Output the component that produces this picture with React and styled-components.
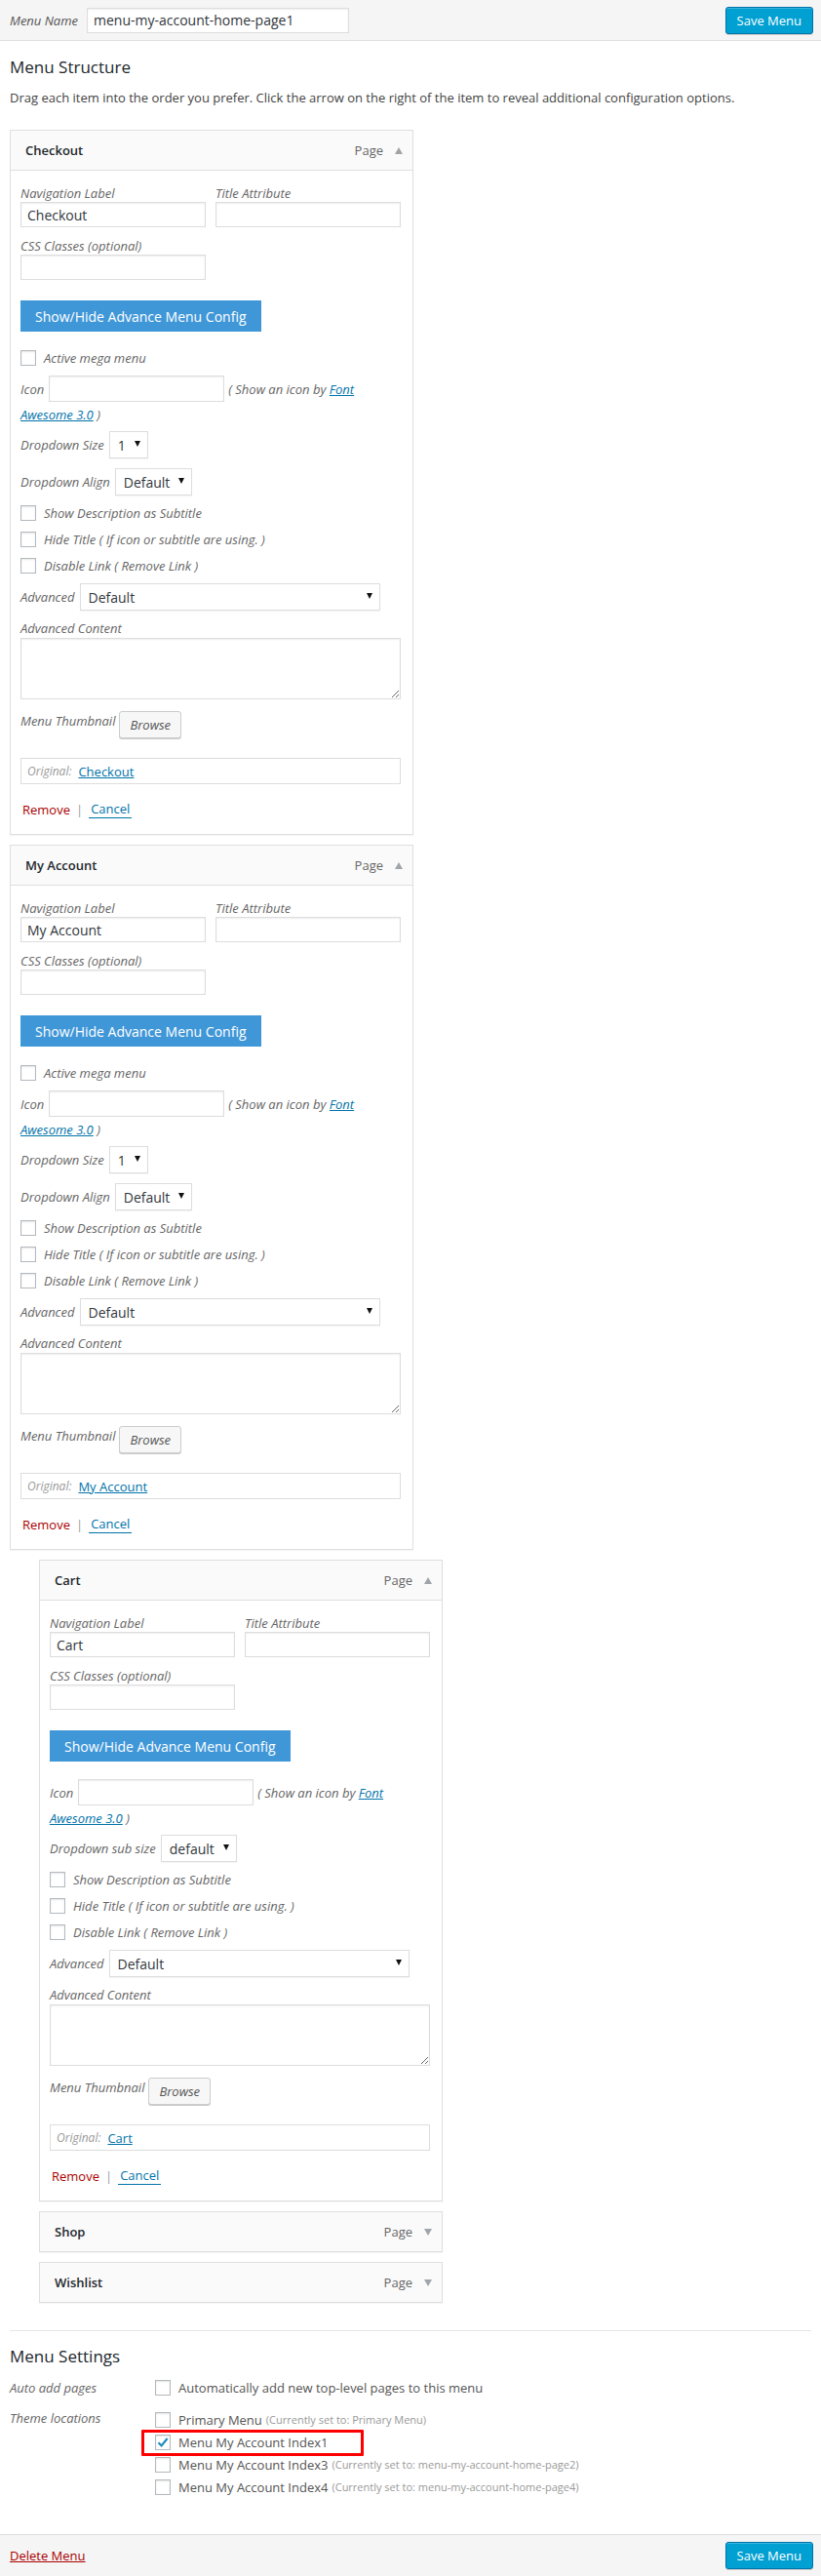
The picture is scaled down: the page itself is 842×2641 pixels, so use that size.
import styled, { createGlobalStyle } from 'styled-components';

const GlobalStyle = createGlobalStyle`
  html, body {
    margin: 0;
    padding: 0;
    background: #fff;
  }
  body {
    font-family: "Open Sans", "Liberation Sans", sans-serif;
    font-size: 13px;
    color: #444;
  }
  * {
    box-sizing: border-box;
  }
`;

const items = [
    { title: 'Checkout', depth: 0, open: true, mega: true },
    { title: 'My Account', depth: 0, open: true, mega: true },
    { title: 'Cart', depth: 1, open: true, mega: false },
    { title: 'Shop', depth: 1, open: false },
    { title: 'Wishlist', depth: 1, open: false },
];

const locations = [
    { name: 'Primary Menu', note: '(Currently set to: Primary Menu)' },
    { name: 'Menu My Account Index1', checked: true, marked: true },
    { name: 'Menu My Account Index3', note: '(Currently set to: menu-my-account-home-page2)' },
    { name: 'Menu My Account Index4', note: '(Currently set to: menu-my-account-home-page4)' },
];

function Check({ checked }) {
    return (
        <Box16>
            {checked && (
                <svg width="14" height="14" viewBox="0 0 14 14">
                    <path d="M2.5 7.2 L5.6 10.4 L11.6 3" fill="none" stroke="#1e8cbe" strokeWidth="2.2" />
                </svg>
            )}
        </Box16>
    );
}

function MenuItem({ item }) {
    return (
        <ItemBox $depth={item.depth}>
            <Handle $open={item.open}>
                <ItemTitle>{item.title}</ItemTitle>
                <ItemType>Page</ItemType>
                <Toggle $open={item.open} />
            </Handle>
            {item.open && (
                <Settings>
                    <FieldPair>
                        <Field>
                            <FieldLabel>Navigation Label</FieldLabel>
                            <TextInput readOnly value={item.title} />
                        </Field>
                        <Field>
                            <FieldLabel>Title Attribute</FieldLabel>
                            <TextInput readOnly value="" />
                        </Field>
                    </FieldPair>
                    <Field $mt={10}>
                        <FieldLabel>CSS Classes (optional)</FieldLabel>
                        <TextInput readOnly value="" />
                    </Field>
                    <ConfigButton $mt={21}>Show/Hide Advance Menu Config</ConfigButton>
                    {item.mega && (
                        <CheckRow $mt={17}>
                            <Check />
                            <span>Active mega menu</span>
                        </CheckRow>
                    )}
                    <IconBlock $mt={item.mega ? 8 : 18}>
                        <IconRow>
                            <span>Icon</span>
                            <IconInput readOnly value="" />
                            <span>( Show an icon by <Link href="#">Font</Link></span>
                        </IconRow>
                        <IconNote>
                            <Link href="#">Awesome 3.0</Link> )
                        </IconNote>
                    </IconBlock>
                    {item.mega ? (
                        <>
                            <SelectRow $mt={8}>
                                <span>Dropdown Size</span>
                                <SelectBox $w={40}>1<Caret /></SelectBox>
                            </SelectRow>
                            <SelectRow $mt={10}>
                                <span>Dropdown Align</span>
                                <SelectBox $w={79}>Default<Caret /></SelectBox>
                            </SelectRow>
                        </>
                    ) : (
                        <SelectRow $mt={8}>
                            <span>Dropdown sub size</span>
                            <SelectBox $w={78}>default<Caret /></SelectBox>
                        </SelectRow>
                    )}
                    <CheckRow $mt={8}>
                        <Check />
                        <span>Show Description as Subtitle</span>
                    </CheckRow>
                    <CheckRow $mt={7}>
                        <Check />
                        <span>Hide Title ( If icon or subtitle are using. )</span>
                    </CheckRow>
                    <CheckRow $mt={7}>
                        <Check />
                        <span>Disable Link ( Remove Link )</span>
                    </CheckRow>
                    <SelectRow $mt={8}>
                        <span>Advanced</span>
                        <SelectBox $w={308}>Default<Caret /></SelectBox>
                    </SelectRow>
                    <Field $mt={9} $wide>
                        <FieldLabel>Advanced Content</FieldLabel>
                        <TextArea readOnly value="" />
                    </Field>
                    <ThumbRow $mt={12}>
                        <span>Menu Thumbnail</span>
                        <BrowseButton>Browse</BrowseButton>
                    </ThumbRow>
                    <Original $mt={20}>
                        <span>Original:</span>
                        <Link href="#">{item.title}</Link>
                    </Original>
                    <Actions $mt={16}>
                        <RemoveLink href="#">Remove</RemoveLink>
                        <Sep>|</Sep>
                        <CancelLink href="#">Cancel</CancelLink>
                    </Actions>
                </Settings>
            )}
        </ItemBox>
    );
}

export default function App() {
    return (
        <Page>
            <GlobalStyle />
            <Bar $top>
                <NameGroup>
                    <NameLabel>Menu Name</NameLabel>
                    <NameInput readOnly value="menu-my-account-home-page1" />
                </NameGroup>
                <SaveButton>Save Menu</SaveButton>
            </Bar>
            <Content>
                <SectionTitle $mt={16}>Menu Structure</SectionTitle>
                <Hint>Drag each item into the order you prefer. Click the arrow on the right of the item to reveal additional configuration options.</Hint>
                <MenuList>
                    {items.map((item, index) => <MenuItem item={item} key={index} />)}
                </MenuList>
                <Divider />
                <SectionTitle $mt={15}>Menu Settings</SectionTitle>
                <SettingRow $mt={11}>
                    <SettingLabel>Auto add pages</SettingLabel>
                    <Options>
                        <Option>
                            <Check />
                            <span>Automatically add new top-level pages to this menu</span>
                        </Option>
                    </Options>
                </SettingRow>
                <SettingRow $mt={11}>
                    <SettingLabel>Theme locations</SettingLabel>
                    <Options>
                        {locations.map((loc) => (
                            <Option key={loc.name} $tall>
                                {loc.marked && <Highlight />}
                                <Check checked={loc.checked} />
                                <span>{loc.name}</span>
                                {loc.note && <Note>{loc.note}</Note>}
                            </Option>
                        ))}
                    </Options>
                </SettingRow>
            </Content>
            <Bar>
                <DeleteLink href="#">Delete Menu</DeleteLink>
                <SaveButton>Save Menu</SaveButton>
            </Bar>
        </Page>
    );
}

const Page = styled.div`
    width: 842px;
    display: flex;
    flex-direction: column;
`

const Bar = styled.div`
    display: flex;
    align-items: center;
    justify-content: space-between;
    height: ${(p) => (p.$top ? '42px' : '44px')};
    padding: 0 8px 0 10px;
    background: #f5f5f5;
    border-top: ${(p) => (p.$top ? 'none' : '1px solid #dfdfdf')};
    border-bottom: 1px solid #dfdfdf;
    margin-top: ${(p) => (p.$top ? '0' : '37px')};
`

const NameGroup = styled.div`
    display: flex;
    align-items: center;
    gap: 9px;
`

const NameLabel = styled.span`
    font-style: italic;
    color: #555;
    font-size: 13px;
`

const NameInput = styled.input`
    width: 269px;
    height: 26px;
    padding: 0 6px;
    border: 1px solid #ddd;
    box-shadow: inset 0 1px 2px rgba(0, 0, 0, 0.07);
    font-family: "Open Sans", "Liberation Sans", sans-serif;
    font-size: 14px;
    color: #32373c;
    outline: none;
`

const SaveButton = styled.button`
    height: 28px;
    padding: 0 11px;
    background: #00a0d2;
    border: 1px solid #0073aa;
    border-radius: 3px;
    box-shadow: inset 0 1px 0 rgba(120, 200, 230, 0.5), 0 1px 0 rgba(0, 0, 0, 0.15);
    color: #fff;
    font-family: "Open Sans", "Liberation Sans", sans-serif;
    font-size: 13px;
    line-height: 26px;
`

const Content = styled.div`
    padding: 0 10px;
    display: flex;
    flex-direction: column;
`

const SectionTitle = styled.h3`
    margin: ${(p) => p.$mt}px 0 0;
    font-size: 17px;
    font-weight: 400;
    line-height: 22px;
    color: #23282d;
`

const Hint = styled.p`
    margin: 11px 0 0;
    line-height: 18px;
    color: #444;
`

const MenuList = styled.div`
    margin-top: 24px;
    display: flex;
    flex-direction: column;
    align-items: flex-start;
    gap: 10px;
`

const ItemBox = styled.div`
    width: 414px;
    margin-left: ${(p) => p.$depth * 30}px;
    border: 1px solid #dfdfdf;
    box-shadow: 0 1px 1px rgba(0, 0, 0, 0.04);
    background: #fff;
`

const Handle = styled.div`
    display: flex;
    align-items: center;
    height: ${(p) => (p.$open ? '41px' : '40px')};
    padding: 0 10px 0 15px;
    background: #fafafa;
    border-bottom: ${(p) => (p.$open ? '1px solid #dfdfdf' : 'none')};
`

const ItemTitle = styled.span`
    flex: 1;
    font-weight: 600;
    color: #23282d;
`

const ItemType = styled.span`
    color: #666;
`

const Toggle = styled.span`
    margin-left: 12px;
    width: 0;
    height: 0;
    border-left: 4px solid transparent;
    border-right: 4px solid transparent;
    border-bottom: ${(p) => (p.$open ? '7px solid #a0a5aa' : 'none')};
    border-top: ${(p) => (p.$open ? 'none' : '7px solid #a0a5aa')};
`

const Settings = styled.div`
    display: flex;
    flex-direction: column;
    align-items: flex-start;
    padding: 14px 12px 16px 10px;
`

const FieldPair = styled.div`
    display: flex;
    gap: 10px;
`

const Field = styled.div`
    display: flex;
    flex-direction: column;
    width: ${(p) => (p.$wide ? '390px' : '190px')};
    margin-top: ${(p) => p.$mt || 0}px;
`

const FieldLabel = styled.label`
    display: block;
    line-height: 18px;
    font-style: italic;
    color: #666;
`

const TextInput = styled.input`
    width: 100%;
    height: 26px;
    padding: 0 6px;
    border: 1px solid #ddd;
    box-shadow: inset 0 1px 2px rgba(0, 0, 0, 0.07);
    font-family: "Open Sans", "Liberation Sans", sans-serif;
    font-size: 14px;
    color: #32373c;
    outline: none;
`

const TextArea = styled.textarea`
    width: 100%;
    height: 63px;
    margin-top: 1px;
    border: 1px solid #ddd;
    box-shadow: inset 0 1px 2px rgba(0, 0, 0, 0.07);
    outline: none;
    resize: both;
`

const ConfigButton = styled.button`
    margin-top: ${(p) => p.$mt}px;
    height: 32px;
    padding: 0 15px;
    border: none;
    background: #4097d8;
    color: #fff;
    font-family: "Open Sans", "Liberation Sans", sans-serif;
    font-size: 14px;
`

const CheckRow = styled.div`
    display: flex;
    align-items: center;
    gap: 8px;
    height: 20px;
    margin-top: ${(p) => p.$mt}px;
    font-style: italic;
    color: #666;
`

const Box16 = styled.span`
    flex: none;
    display: inline-flex;
    align-items: center;
    justify-content: center;
    width: 16px;
    height: 16px;
    border: 1px solid #b4b9be;
    background: #fff;
    box-shadow: inset 0 1px 2px rgba(0, 0, 0, 0.1);
`

const IconBlock = styled.div`
    display: flex;
    flex-direction: column;
    margin-top: ${(p) => p.$mt}px;
    font-style: italic;
    color: #666;
`

const IconRow = styled.div`
    display: flex;
    align-items: center;
    height: 27px;
`

const IconNote = styled.div`
    margin-top: 4px;
    line-height: 18px;
`

const IconInput = styled.input`
    width: 180px;
    height: 27px;
    margin: 0 4px 0 5px;
    border: 1px solid #ddd;
    box-shadow: inset 0 1px 2px rgba(0, 0, 0, 0.07);
    outline: none;
`

const Link = styled.a`
    color: #0073aa;
    text-decoration: underline;
`

const SelectRow = styled.div`
    display: flex;
    align-items: center;
    gap: 5px;
    margin-top: ${(p) => p.$mt}px;
    font-style: italic;
    color: #666;
`

const SelectBox = styled.div`
    display: flex;
    align-items: center;
    justify-content: space-between;
    width: ${(p) => p.$w}px;
    height: 28px;
    padding: 0 7px 0 8px;
    border: 1px solid #ddd;
    background: #fff;
    box-shadow: 0 1px 1px rgba(0, 0, 0, 0.04);
    font-style: normal;
    font-size: 14px;
    color: #32373c;
`

const Caret = styled.span`
    width: 0;
    height: 0;
    border-left: 3px solid transparent;
    border-right: 3px solid transparent;
    border-top: 6px solid #111;
    margin-top: -2px;
`

const ThumbRow = styled.div`
    display: flex;
    align-items: flex-start;
    gap: 4px;
    margin-top: ${(p) => p.$mt}px;
    line-height: 20px;
    font-style: italic;
    color: #666;
`

const BrowseButton = styled.button`
    height: 28px;
    padding: 0 10px;
    border: 1px solid #ccc;
    border-radius: 3px;
    background: #f7f7f7;
    box-shadow: 0 1px 0 #ccc;
    font-family: "Open Sans", "Liberation Sans", sans-serif;
    font-style: italic;
    font-size: 13px;
    color: #555;
`

const Original = styled.div`
    display: flex;
    align-items: center;
    gap: 7px;
    width: 390px;
    height: 27px;
    margin-top: ${(p) => p.$mt}px;
    padding: 0 6px;
    border: 1px solid #ddd;
    & > span {
        font-style: italic;
        font-size: 12px;
        color: #999;
    }
`

const Actions = styled.div`
    display: flex;
    align-items: center;
    margin-top: ${(p) => p.$mt}px;
    padding-left: 2px;
    line-height: 18px;
`

const RemoveLink = styled.a`
    color: #a00;
    text-decoration: none;
`

const Sep = styled.span`
    margin: 0 6px;
    color: #999;
`

const CancelLink = styled.a`
    color: #0073aa;
    text-decoration: none;
    padding: 0 2px;
    border-bottom: 1px solid #0073aa;
`

const Divider = styled.div`
    margin-top: 28px;
    border-top: 1px solid #e5e5e5;
`

const SettingRow = styled.div`
    display: flex;
    margin-top: ${(p) => p.$mt}px;
`

const SettingLabel = styled.div`
    width: 149px;
    line-height: 20px;
    font-style: italic;
    color: #666;
`

const Options = styled.div`
    display: flex;
    flex-direction: column;
`

const Option = styled.div`
    position: relative;
    display: flex;
    align-items: center;
    gap: 8px;
    height: ${(p) => (p.$tall ? '23px' : '20px')};
    color: #555;
`

const Note = styled.span`
    margin-left: -4px;
    font-size: 11px;
    color: #999;
`

const Highlight = styled.span`
    position: absolute;
    left: -14px;
    top: -1px;
    width: 228px;
    height: 27px;
    border: 3px solid #f00;
    border-radius: 1px;
`

const DeleteLink = styled.a`
    color: #a00;
    text-decoration: underline;
`
